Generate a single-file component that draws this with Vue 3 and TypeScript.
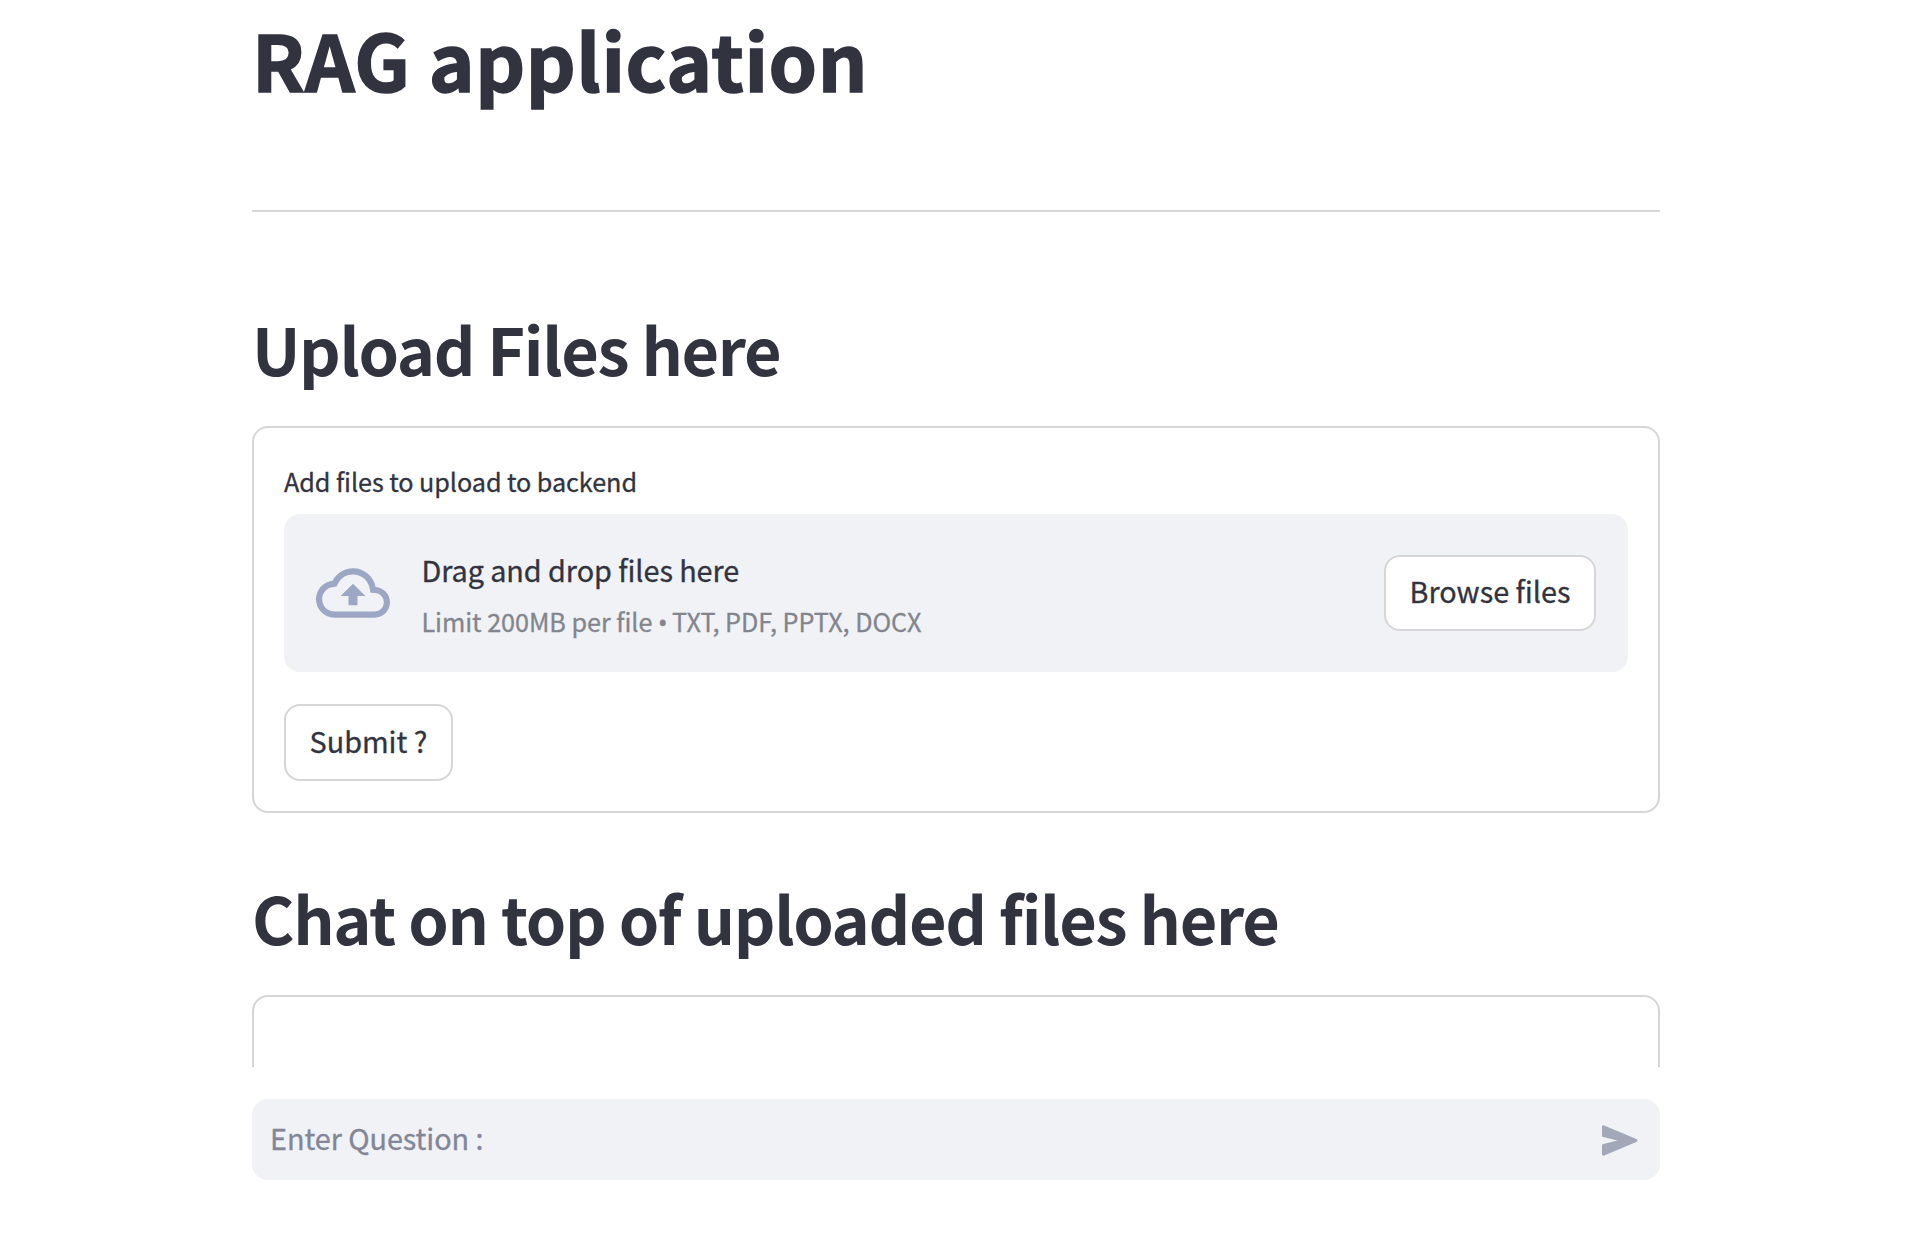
<script setup lang="ts">
import { ref } from 'vue'

const question = ref<string>('')
const fileTypes: string[] = ['TXT', 'PDF', 'PPTX', 'DOCX']
</script>

<template>
  <div class="app">
    <main class="column">
      <h1>RAG application</h1>
      <hr />
      <h2>Upload Files here</h2>
      <section class="card">
        <div class="label">Add files to upload to backend</div>
        <div class="dropzone">
          <svg class="cloud" viewBox="0 0 24 24" aria-hidden="true">
            <path
              d="M19.35 10.04A7.49 7.49 0 0012 4C9.11 4 6.6 5.64 5.35 8.04A5.994 5.994 0 000 14c0 3.31 2.69 6 6 6h13c2.76 0 5-2.24 5-5 0-2.64-2.05-4.78-4.65-4.96zM19 18H6c-2.21 0-4-1.79-4-4 0-2.05 1.53-3.76 3.56-3.97l1.07-.11.5-.95A5.469 5.469 0 0112 6c2.62 0 4.88 1.86 5.39 4.43l.3 1.5 1.53.11A2.98 2.98 0 0122 15c0 1.65-1.35 3-3 3zM8 13h2.55v3h2.9v-3H16l-4-4z"
            />
          </svg>
          <div class="instructions">
            <span class="drag">Drag and drop files here</span>
            <span class="limit"
              >Limit 200MB per file <span class="bullet">•</span> {{ fileTypes.join(', ') }}</span
            >
          </div>
          <button class="browse" type="button">Browse files</button>
        </div>
        <button class="submit" type="button">Submit ?</button>
      </section>
      <h2 class="second">Chat on top of uploaded files here</h2>
      <section class="card chat"></section>
    </main>
    <footer class="bottom">
      <div class="chat-input">
        <input v-model="question" type="text" placeholder="Enter Question :" />
        <svg class="send" viewBox="0 0 36 31" aria-hidden="true">
          <path
            d="M0 1.7C0 .5 1.1-.1 2.2.4L34.3 14c1.5.7 1.5 2.3 0 3L2.2 30.6C1.1 31.1 0 30.5 0 29.3V20.6C0 19.7.5 19.1 1.4 18.9L15.5 15.5 1.4 12.1C.5 11.9 0 11.3 0 10.4Z"
          />
        </svg>
      </div>
    </footer>
  </div>
</template>

<style>
body {
  margin: 0;
  background: #fff;
}
</style>

<style scoped>
.app {
  height: 1240px;
  overflow: hidden;
  display: flex;
  flex-direction: column;
  align-items: center;
  box-sizing: border-box;
  padding-right: 2px;
  background: #fff;
  color: #31333f;
  font-family: 'Noto Sans CJK SC', 'Noto Sans', sans-serif;
  -webkit-text-stroke: 0.3px currentColor;
}
.column {
  width: 1408px;
  height: 1067px;
  overflow: hidden;
}
h1,
h2 {
  margin: 0;
  white-space: nowrap;
}
h1 {
  height: 210px;
  box-sizing: border-box;
  padding-top: 5px;
  font-size: 77.6px;
  line-height: 106px;
  font-weight: 700;
  letter-spacing: 0.6px;
  -webkit-text-stroke: 1.5px currentColor;
}
hr {
  margin: 0;
  border: 0;
  height: 2px;
  background: #d6d6d8;
}
h2 {
  height: 214px;
  box-sizing: border-box;
  padding-top: 93px;
  font-size: 64.8px;
  line-height: 86px;
  font-weight: 600;
  letter-spacing: -1.38px;
  -webkit-text-stroke: 0;
}
h2.second {
  height: 182px;
  padding-top: 61px;
  letter-spacing: -1.34px;
}
.card {
  box-sizing: border-box;
  height: 387px;
  padding: 30px;
  border: 2px solid #d6d6d8;
  border-radius: 16px;
  display: flex;
  flex-direction: column;
  align-items: flex-start;
}
.card.chat {
  height: 200px;
}
.label {
  height: 56px;
  box-sizing: border-box;
  font-size: 25.2px;
  line-height: 46px;
  letter-spacing: -0.06px;
  white-space: nowrap;
}
.dropzone {
  align-self: stretch;
  height: 158px;
  flex: none;
  box-sizing: border-box;
  padding: 0 32px;
  display: flex;
  align-items: center;
  background: #f0f2f6;
  border-radius: 16px;
}
.cloud {
  width: 74px;
  height: 74px;
  flex: none;
  fill: #9ba7c4;
}
.instructions {
  flex: 1;
  margin-left: 31.4px;
  padding-top: 4px;
  display: flex;
  flex-direction: column;
  white-space: nowrap;
}
.drag {
  font-size: 28.8px;
  line-height: 52px;
  letter-spacing: -0.06px;
}
.limit {
  font-size: 25.2px;
  line-height: 50px;
  letter-spacing: -0.04px;
  color: #83858c;
}
.bullet {
  font-family: 'Noto Sans', sans-serif;
  line-height: 1;
  letter-spacing: -1px;
}
button {
  box-sizing: border-box;
  height: 77px;
  padding: 0 0 4px;
  border: 2px solid #d6d6d8;
  border-radius: 16px;
  background: #fff;
  color: inherit;
  font-family: inherit;
  font-size: 28.8px;
  line-height: 40px;
  white-space: nowrap;
  -webkit-text-stroke: 0.3px currentColor;
}
.browse {
  width: 212px;
  height: 76px;
}
.submit {
  width: 169px;
  margin-top: 32px;
}
.bottom {
  width: 1408px;
  padding-top: 32px;
}
.chat-input {
  height: 81px;
  box-sizing: border-box;
  padding: 0 22px 0 18px;
  display: flex;
  align-items: center;
  background: #f0f2f6;
  border-radius: 16px;
}
input {
  flex: 1;
  box-sizing: border-box;
  height: 60px;
  padding: 0 0 4px;
  border: 0;
  outline: 0;
  background: transparent;
  color: inherit;
  font-family: inherit;
  font-size: 28.8px;
  letter-spacing: -0.06px;
  -webkit-text-stroke: 0.3px #838696;
}
input::placeholder {
  color: #838696;
  opacity: 1;
}
.send {
  width: 36px;
  height: 31px;
  flex: none;
  margin-top: 1px;
  fill: #a3a8b8;
}
</style>
